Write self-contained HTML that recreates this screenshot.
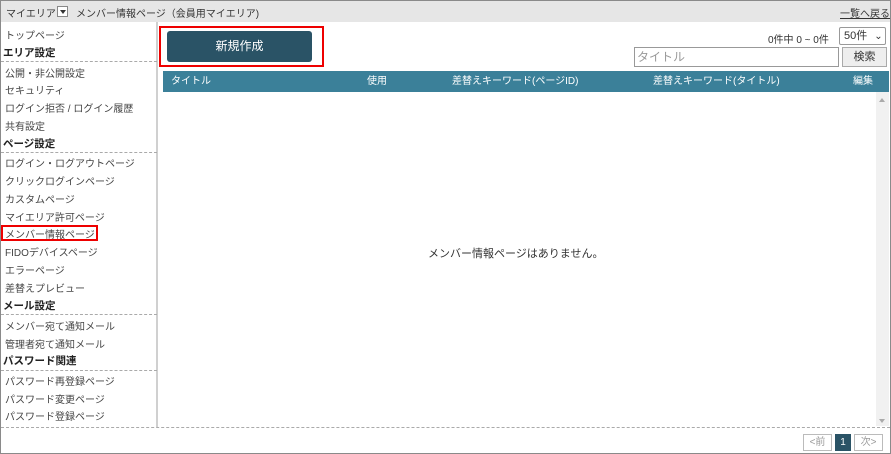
<!DOCTYPE html>
<html><head><meta charset="utf-8"><style>
*{margin:0;padding:0;box-sizing:border-box}
body{width:891px;height:454px;background:#fff;font-family:"Liberation Sans","Noto Sans CJK JP",sans-serif;font-size:10px;color:#333;position:relative;overflow:hidden}
.a{position:absolute;white-space:nowrap}
.frame{position:absolute;left:0;top:0;width:891px;height:454px;border:1px solid #8a8a8a}
.top{position:absolute;left:1px;top:1px;width:889px;height:21px;background:#e6e6e6}
.side{position:absolute;left:1px;top:22px;width:157px;height:405px;border-right:2px solid #d0d0d0}
.it{position:absolute;left:5px;color:#444;font-size:10px;white-space:nowrap}
.hd{position:absolute;left:3px;font-weight:bold;color:#222;font-size:10.5px;white-space:nowrap}
.dl{position:absolute;left:1px;width:156px;border-top:1px dashed #aaa}
</style></head><body>
<div class="frame"></div>
<div class="top"></div>
<div class="a" style="left:6px;top:5px;color:#333">マイエリア</div>
<div class="a" style="left:57px;top:6px;width:11px;height:11px;border:1px solid #888;background:#fff"><div style="position:absolute;left:2px;top:3px;border-left:3px solid transparent;border-right:3px solid transparent;border-top:4px solid #333"></div></div>
<div class="a" style="left:76px;top:5px;color:#333">メンバー情報ページ（会員用マイエリア)</div>
<div class="a" style="left:840px;top:5px;color:#333;text-decoration:underline">一覧へ戻る</div>

<div class="side"></div>
<div class="it" style="top:27px">トップページ</div>
<div class="hd" style="top:45px">エリア設定</div>
<div class="dl" style="top:61px"></div>
<div class="it" style="top:65px">公開・非公開設定</div>
<div class="it" style="top:82px">セキュリティ</div>
<div class="it" style="top:100px">ログイン拒否 / ログイン履歴</div>
<div class="it" style="top:118px">共有設定</div>
<div class="hd" style="top:136px">ページ設定</div>
<div class="dl" style="top:152px"></div>
<div class="it" style="top:155px">ログイン・ログアウトページ</div>
<div class="it" style="top:173px">クリックログインページ</div>
<div class="it" style="top:191px">カスタムページ</div>
<div class="it" style="top:209px">マイエリア許可ページ</div>
<div class="a" style="left:1px;top:225px;width:97px;height:16px;border:2px solid #e00"></div>
<div class="it" style="top:226px">メンバー情報ページ</div>
<div class="it" style="top:244px">FIDOデバイスページ</div>
<div class="it" style="top:262px">エラーページ</div>
<div class="it" style="top:280px">差替えプレビュー</div>
<div class="hd" style="top:298px">メール設定</div>
<div class="dl" style="top:314px"></div>
<div class="it" style="top:318px">メンバー宛て通知メール</div>
<div class="it" style="top:336px">管理者宛て通知メール</div>
<div class="hd" style="top:353px">パスワード関連</div>
<div class="dl" style="top:370px"></div>
<div class="it" style="top:373px">パスワード再登録ページ</div>
<div class="it" style="top:391px">パスワード変更ページ</div>
<div class="it" style="top:408px">パスワード登録ページ</div>
<div class="a" style="left:1px;top:427px;width:889px;border-top:1px dashed #aaa"></div>

<div class="a" style="left:159px;top:26px;width:165px;height:41px;border:2px solid #e00"></div>
<div class="a" style="left:167px;top:31px;width:145px;height:31px;background:#2a5366;border-radius:3px;color:#fff;font-size:12px;text-align:center;line-height:31px">新規作成</div>

<div class="a" style="left:768px;top:31px;color:#333">0件中 0 ~ 0件</div>
<div class="a" style="left:839px;top:27px;width:47px;height:18px;border:1px solid #999;border-radius:2px;padding-left:4px;line-height:16px;font-size:11px">50件 <span style="font-size:10px;margin-left:4px">⌄</span></div>
<div class="a" style="left:634px;top:47px;width:205px;height:20px;border:1px solid #999;color:#999;font-size:12px;line-height:18px;padding-left:2px">タイトル</div>
<div class="a" style="left:842px;top:47px;width:45px;height:20px;border:1px solid #aaa;background:#eee;text-align:center;line-height:18px;font-size:11px">検索</div>

<div class="a" style="left:163px;top:71px;width:726px;height:21px;background:#3b8099;color:#fff;font-size:10px;line-height:21px">
<span class="a" style="left:8px">タイトル</span>
<span class="a" style="left:204px">使用</span>
<span class="a" style="left:289px">差替えキーワード(ページID)</span>
<span class="a" style="left:490px">差替えキーワード(タイトル)</span>
<span class="a" style="left:690px">編集</span>
</div>
<div class="a" style="left:876px;top:92px;width:13px;height:334px;background:#f1f1f1"></div>
<div class="a" style="left:879px;top:98px;border-left:3px solid transparent;border-right:3px solid transparent;border-bottom:4px solid #aaa"></div>
<div class="a" style="left:879px;top:419px;border-left:3px solid transparent;border-right:3px solid transparent;border-top:4px solid #aaa"></div>
<div class="a" style="left:428px;top:245px;font-size:11px;color:#333">メンバー情報ページはありません。</div>

<div class="a" style="left:803px;top:434px;width:29px;height:17px;border:1px solid #bbb;color:#999;text-align:center;line-height:15px">&lt;前</div>
<div class="a" style="left:835px;top:434px;width:16px;height:17px;background:#2a5366;color:#fff;text-align:center;line-height:17px">1</div>
<div class="a" style="left:854px;top:434px;width:29px;height:17px;border:1px solid #bbb;color:#999;text-align:center;line-height:15px">次&gt;</div>
</body></html>
